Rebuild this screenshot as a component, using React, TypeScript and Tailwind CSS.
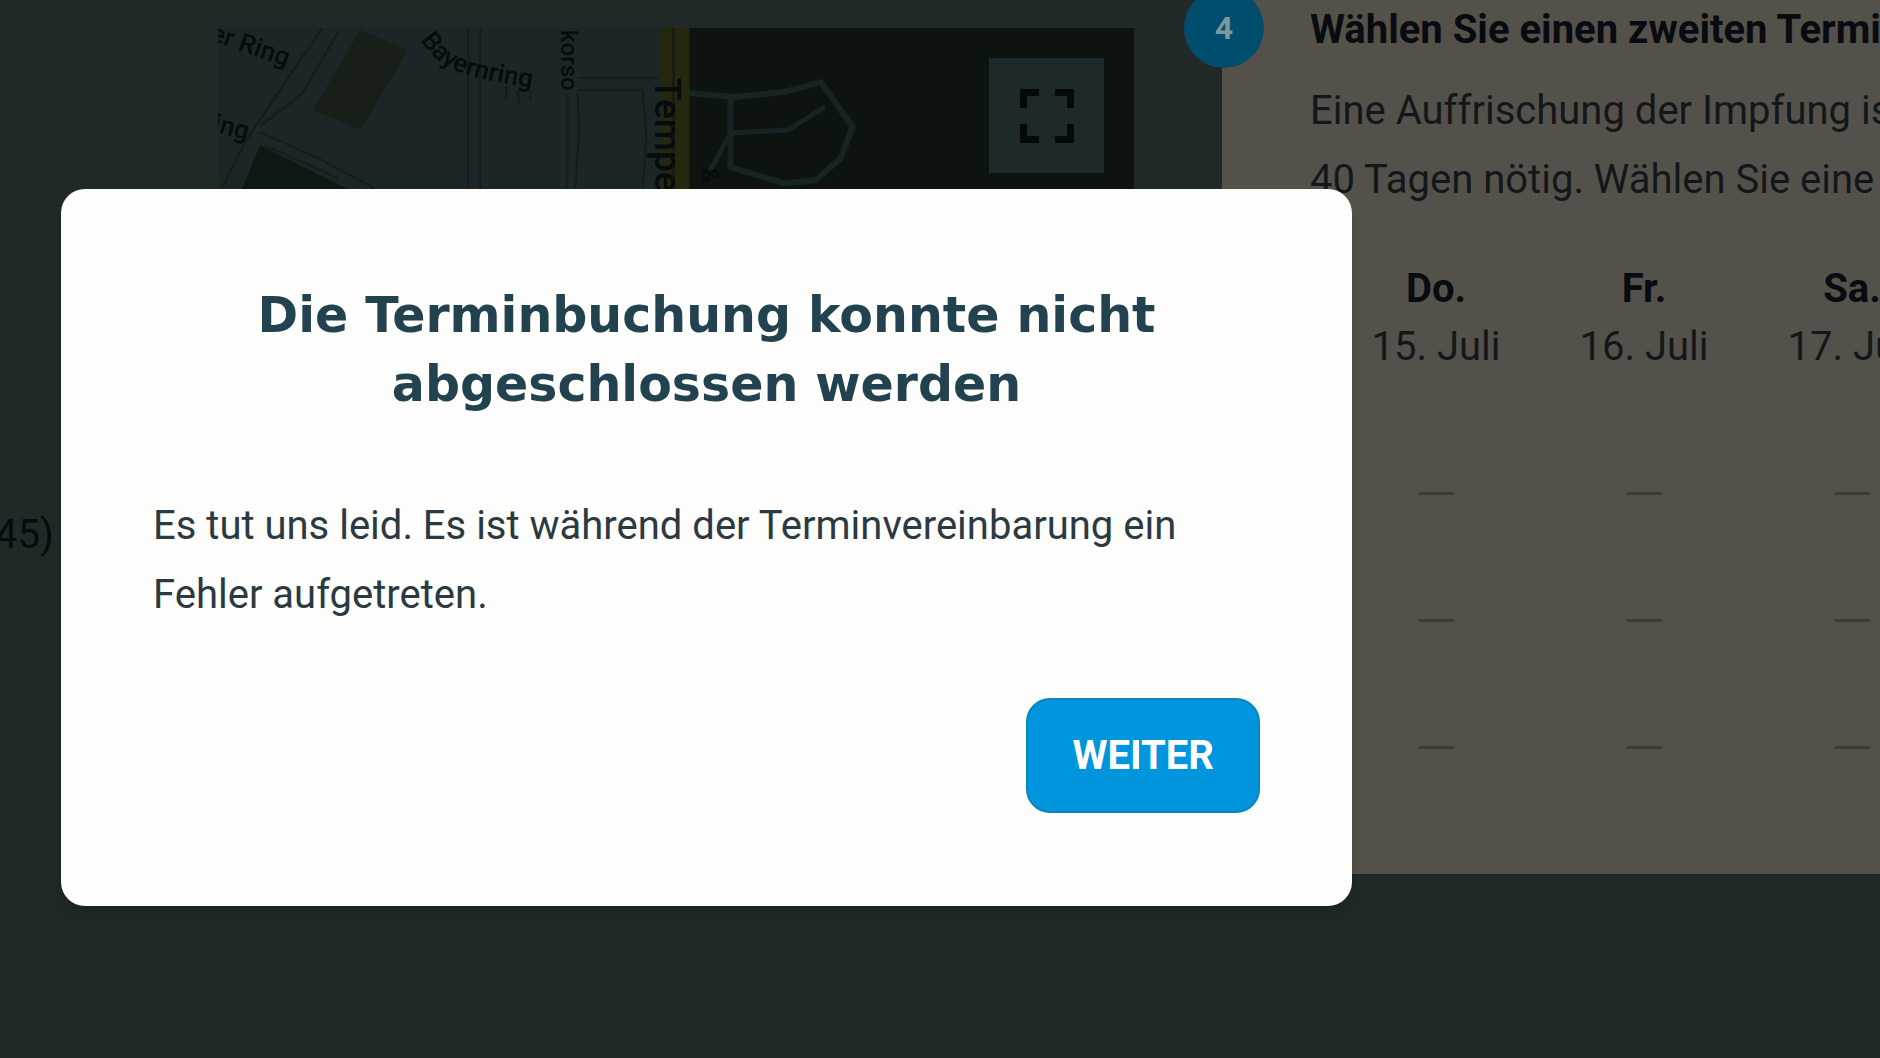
import React, { useState } from "react";

interface Day {
  weekday: string;
  date: string;
}

const days: Day[] = [
  { weekday: "Do.", date: "15. Juli" },
  { weekday: "Fr.", date: "16. Juli" },
  { weekday: "Sa.", date: "17. Juli" },
];

const slotRows = [0, 1, 2];

function FullscreenIcon() {
  return (
    <svg
      viewBox="0 0 54 54"
      className="size-[54px]"
      fill="none"
      stroke="currentColor"
      strokeWidth="7"
      aria-hidden="true"
    >
      <path d="M3.500 19V3.500H19M35 3.500h15.500V19M50.500 35v15.500H35M19 50.500H3.500V35" />
    </svg>
  );
}

function StreetMap() {
  return (
    <svg
      viewBox="0 0 915 440"
      preserveAspectRatio="xMinYMin slice"
      className="block h-[440px] w-full"
      fontFamily="Roboto, 'Liberation Sans', sans-serif"
      fontWeight="500"
      fill="#060b0f"
    >
      <rect width="915" height="440" fill="#1d2627" />

      {/* parks */}
      <path d="M142 2 190 22 142 102 95 82Z" fill="#171f18" />
      <path d="M42 117 128 160 200 200 0 440V220Z" fill="#0d1713" />
      <rect x="466" width="449" height="440" fill="#0d1410" />

      {/* streets */}
      <g fill="none" stroke="#151b20" strokeWidth="2">
        <path d="M104 0 62 62 28 112 M120 4 84 66 42 98 M28 112 4 160" />
        <path d="M42 104 100 130 156 160 M48 118 120 150" />
        <path d="M250 0V440M262 0V440" />
        <path d="M349 66V440M359 64 361 100 357 160V440" />
        <path d="M360 50H440M360 62H424L428 110 424 160" />
        <path d="M288 58V72M300 62V76M312 62V72" />
      </g>
      <g fill="none" stroke="#182323" strokeWidth="6" strokeLinejoin="round">
        <path d="M471 65 516 69 565 64 602 54 634 99 622 130 597 152 565 155 512 139V69" />
        <path d="M512 105 569 102 606 79M512 105 490 145" strokeWidth="5" />
      </g>

      {/* main road */}
      <rect x="442" width="29" height="440" fill="#25270f" />
      <path d="M455 0V440" stroke="#1a1d0c" strokeWidth="3" />

      {/* street names */}
      <path id="bayernring" d="M202 12C226 48 252 50 342 64" fill="none" />
      <text fontSize="26" transform="translate(-9 12) rotate(19)">
        er Ring
      </text>
      <text fontSize="26" transform="translate(-6 103) rotate(14)">
        ing
      </text>
      <text fontSize="26">
        <textPath href="#bayernring">Bayernring</textPath>
      </text>
      <text fontSize="24" transform="translate(343 2) rotate(90)">
        korso
      </text>
      <text fontSize="37" transform="translate(437 50) rotate(90)">
        Tempe
      </text>
      <text fontSize="24" transform="translate(482 141) rotate(80)">
        &amp;
      </text>
    </svg>
  );
}

function LocationColumn() {
  return (
    <section className="w-[65%] shrink-0">
      <div className="relative mt-7 mr-[88px] ml-[218px]">
        <StreetMap />
        <button
          type="button"
          aria-label="Vollbild"
          className="absolute top-[30px] right-[30px] flex size-[115px] items-center justify-center bg-[#1e292b] text-[#05090b]"
        >
          <FullscreenIcon />
        </button>
      </div>
      <p className="mt-8 flex w-[54px] justify-end text-[40px] leading-[69px] text-[#060b0d]">
        45)
      </p>
    </section>
  );
}

function AppointmentColumn() {
  return (
    <section className="relative min-w-0 flex-1 self-start bg-[#54514a] pb-[63px] pl-[88px] text-[#14171a]">
      <span className="absolute -top-3 -left-[38px] flex size-20 items-center justify-center rounded-full bg-[#004e6e] text-[32px] font-bold text-[#7f979c]">
        4
      </span>
      <div className="overflow-hidden whitespace-nowrap">
        <h2 className="text-[40px] leading-[60px] font-bold text-[#080b0f]">
          Wählen Sie einen zweiten Termin
        </h2>
        <p className="mt-4 text-[40px] leading-[69px]">
          Eine Auffrischung der Impfung ist
          <br />
          40 Tagen nötig. Wählen Sie eine
        </p>
        <table className="mt-[46px] ml-[22px] w-[624px] table-fixed text-center text-[40px]">
          <thead>
            <tr>
              {days.map((day) => (
                <th key={day.date} className="p-0 leading-[58px] font-normal">
                  <span className="block font-bold text-[#080b0f]">
                    {day.weekday}
                  </span>
                  <span className="block">{day.date}</span>
                </th>
              ))}
            </tr>
          </thead>
          <tbody className="before:block before:h-[54px]">
            {slotRows.map((row) => (
              <tr key={row} className="h-[127px]">
                {days.map((day) => (
                  <td key={day.date} className="p-0">
                    <span className="mx-auto block h-[3px] w-[35px] bg-[#3d3c37]" />
                  </td>
                ))}
              </tr>
            ))}
          </tbody>
        </table>
      </div>
    </section>
  );
}

function ErrorDialog({ onClose }: { onClose: () => void }) {
  return (
    <div className="absolute inset-0 flex items-start pt-[189px] pr-[528px] pl-[61px]">
      <div
        role="dialog"
        aria-labelledby="dialog-title"
        className="flex-1 rounded-3xl bg-[#fdfdfb] px-[92px] pt-[92px] pb-[93px] shadow-lg"
      >
        <h1
          id="dialog-title"
          className="text-center font-['DejaVu_Sans',sans-serif] text-[49px] leading-[69px] font-bold text-[#23424f]"
        >
          Die Terminbuchung konnte nicht
          <br />
          abgeschlossen werden
        </h1>
        <p className="mt-[72px] text-[40px] leading-[69px] text-[#2b3a42]">
          Es tut uns leid. Es ist während der Terminvereinbarung ein Fehler
          aufgetreten.
        </p>
        <div className="mt-[69px] flex justify-end">
          <button
            type="button"
            onClick={onClose}
            className="h-[115px] rounded-3xl border-2 border-[#0d84c0] bg-[#0095dc] px-11 text-[40px] font-bold text-white"
          >
            WEITER
          </button>
        </div>
      </div>
    </div>
  );
}

export default function App() {
  const [open, setOpen] = useState(true);

  return (
    <div className="relative min-h-screen overflow-hidden bg-[#202928] font-[Roboto,'Liberation_Sans',sans-serif]">
      <main className="flex items-start">
        <LocationColumn />
        <AppointmentColumn />
      </main>
      {open && <ErrorDialog onClose={() => setOpen(false)} />}
    </div>
  );
}
